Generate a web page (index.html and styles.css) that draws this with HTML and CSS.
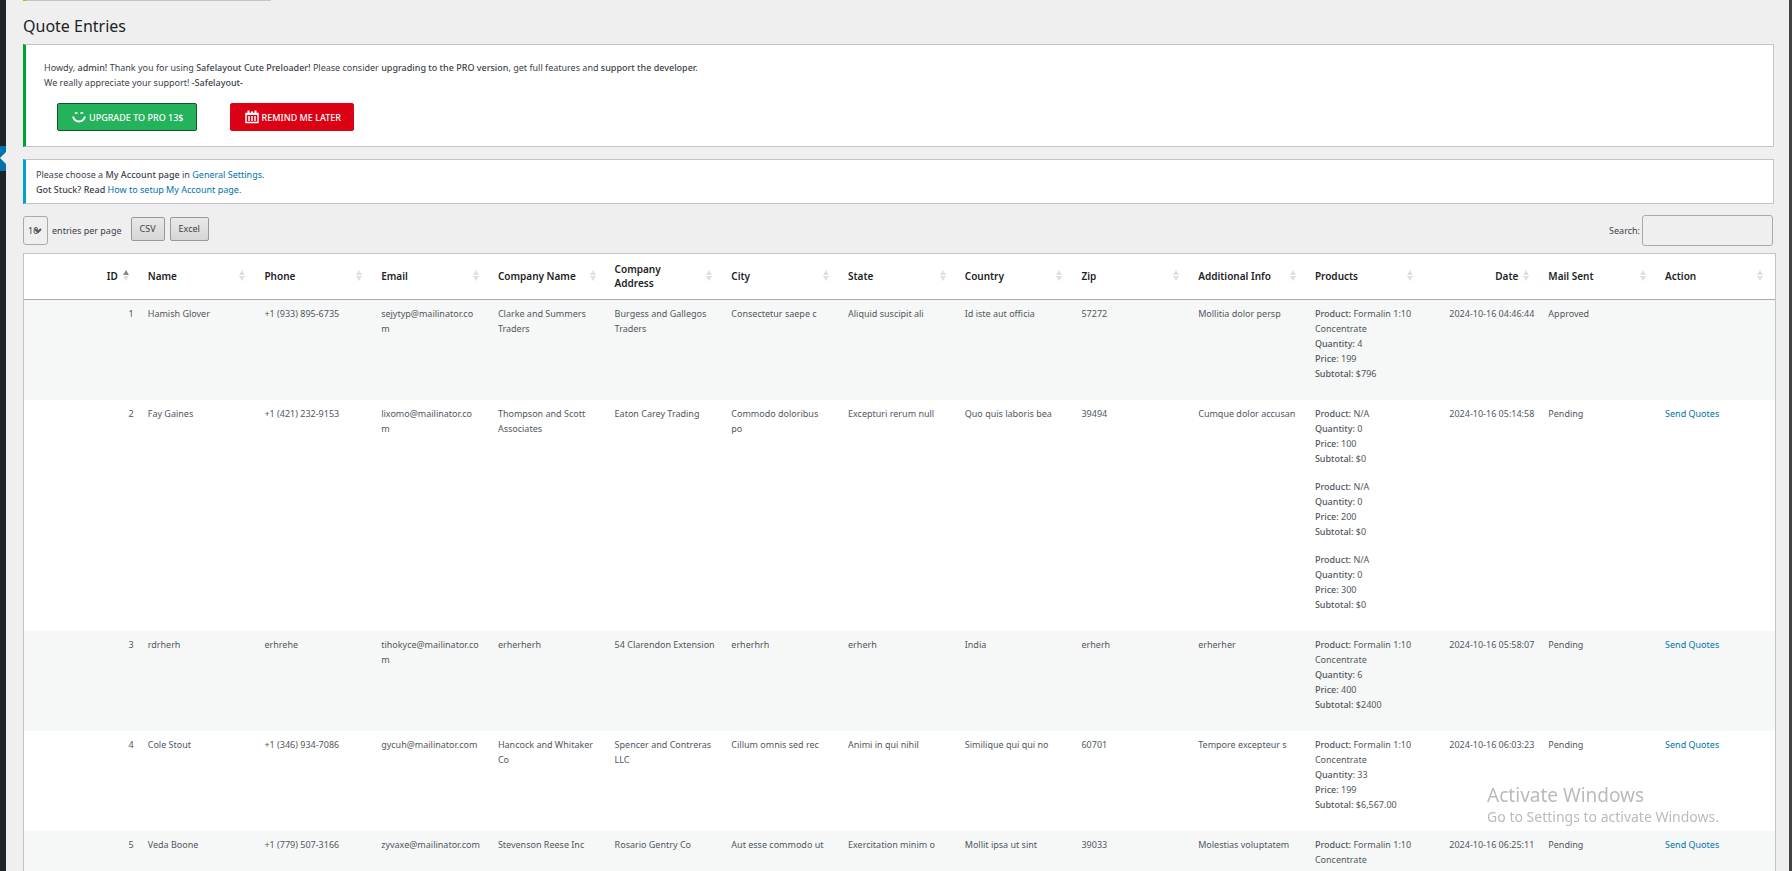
FILE: index.html
```html
<!DOCTYPE html>
<html lang="en">
<head>
    <meta charset="UTF-8">
    <meta name="viewport" content="width=device-width, initial-scale=1.0">
    <title>Quote Entries</title>
    <link rel="stylesheet" href="styles.css">
</head>
<body>
    <div class="admin-menu">
        <div class="menu-current"></div>
    </div>

    <div class="content">
        <div class="notice-edge"></div>
        <h1>Quote Entries</h1>

        <div class="notice notice-success">
            <p>Howdy, <strong>admin!</strong> Thank you for using <strong>Safelayout Cute Preloader!</strong> Please consider <strong>upgrading to the PRO version</strong>, get full features and <strong>support the developer.</strong><br>
            We really appreciate your support! <strong>-Safelayout-</strong></p>
            <div class="notice-actions">
                <button type="button" class="btn btn-upgrade">
                    <svg width="14" height="14" viewBox="0 0 14 14" fill="none" stroke="#fff">
                        <path d="M3 3.500Q4 2 5.500 3.500M8.500 3.500Q10 2 11 3.500" stroke-width="1.500"/>
                        <path d="M1 6.500Q2.500 11.500 7 11.500T13 6.500" stroke-width="2"/>
                    </svg>
                    <span>UPGRADE TO PRO <strong>13$</strong></span>
                </button>
                <button type="button" class="btn btn-remind">
                    <svg width="14" height="14" viewBox="0 0 14 14" fill="none" stroke="#fff">
                        <path d="M1 3.500H13V12.500H1Z" stroke-width="1.500"/>
                        <path d="M1 4H13M3.500 0.500V4M7 1.500V4M10.500 0.500V4" stroke-width="2"/>
                        <path d="M4 6V11M7 6V11M10 6V11" stroke-width="1.500"/>
                    </svg>
                    <span>REMIND ME LATER</span>
                </button>
            </div>
        </div>

        <div class="notice notice-info">
            <p>Please choose a <strong>My Account</strong> <strong>page</strong> in <a href="#">General Settings</a>.<br>
            <strong>Got Stuck? Read</strong> <a href="#">How to setup My Account page</a>.</p>
        </div>

        <div class="toolbar">
            <div class="page-length">
                <select id="page-length">
                    <option>10</option>
                    <option>25</option>
                    <option>50</option>
                </select>
                <svg width="8" height="6" viewBox="0 0 8 6" fill="none" stroke="#50575e" stroke-width="2">
                    <path d="M1 1L4 4L7 1"/>
                </svg>
            </div>
            <label for="page-length">entries per page</label>
            <div class="export">
                <button type="button" class="btn-export">CSV</button>
                <button type="button" class="btn-export">Excel</button>
            </div>
            <div class="search">
                <label for="search">Search:</label>
                <input type="search" id="search">
            </div>
        </div>

        <table class="entries">
            <thead>
                <tr>
                    <th class="num asc"><div><span>ID</span><i class="sort"></i></div></th>
                    <th><div><span>Name</span><i class="sort"></i></div></th>
                    <th><div><span>Phone</span><i class="sort"></i></div></th>
                    <th><div><span>Email</span><i class="sort"></i></div></th>
                    <th><div><span>Company Name</span><i class="sort"></i></div></th>
                    <th><div><span>Company<br>Address</span><i class="sort"></i></div></th>
                    <th><div><span>City</span><i class="sort"></i></div></th>
                    <th><div><span>State</span><i class="sort"></i></div></th>
                    <th><div><span>Country</span><i class="sort"></i></div></th>
                    <th><div><span>Zip</span><i class="sort"></i></div></th>
                    <th><div><span>Additional Info</span><i class="sort"></i></div></th>
                    <th><div><span>Products</span><i class="sort"></i></div></th>
                    <th class="num"><div><span>Date</span><i class="sort"></i></div></th>
                    <th><div><span>Mail Sent</span><i class="sort"></i></div></th>
                    <th><div><span>Action</span><i class="sort"></i></div></th>
                </tr>
            </thead>
            <tbody>
                <tr>
                    <td class="num">1</td>
                    <td>Hamish Glover</td>
                    <td>+1 (933) 895-6735</td>
                    <td>sejytyp@mailinator.co<br>m</td>
                    <td>Clarke and Summers Traders</td>
                    <td>Burgess and Gallegos Traders</td>
                    <td>Consectetur saepe c</td>
                    <td>Aliquid suscipit ali</td>
                    <td>Id iste aut officia</td>
                    <td>57272</td>
                    <td>Mollitia dolor persp</td>
                    <td>
                        <p><strong>Product:</strong> Formalin 1:10 Concentrate<br><strong>Quantity:</strong> 4<br><strong>Price:</strong> 199<br><strong>Subtotal:</strong> $796</p>
                    </td>
                    <td class="num">2024-10-16 04:46:44</td>
                    <td>Approved</td>
                    <td></td>
                </tr>
                <tr>
                    <td class="num">2</td>
                    <td>Fay Gaines</td>
                    <td>+1 (421) 232-9153</td>
                    <td>lixomo@mailinator.co<br>m</td>
                    <td>Thompson and Scott Associates</td>
                    <td>Eaton Carey Trading</td>
                    <td>Commodo doloribus<br>po</td>
                    <td>Excepturi rerum null</td>
                    <td>Quo quis laboris bea</td>
                    <td>39494</td>
                    <td>Cumque dolor accusan</td>
                    <td>
                        <p><strong>Product:</strong> N/A<br><strong>Quantity:</strong> 0<br><strong>Price:</strong> 100<br><strong>Subtotal:</strong> $0</p>
                        <p><strong>Product:</strong> N/A<br><strong>Quantity:</strong> 0<br><strong>Price:</strong> 200<br><strong>Subtotal:</strong> $0</p>
                        <p><strong>Product:</strong> N/A<br><strong>Quantity:</strong> 0<br><strong>Price:</strong> 300<br><strong>Subtotal:</strong> $0</p>
                    </td>
                    <td class="num">2024-10-16 05:14:58</td>
                    <td>Pending</td>
                    <td><a href="#">Send Quotes</a></td>
                </tr>
                <tr>
                    <td class="num">3</td>
                    <td>rdrherh</td>
                    <td>erhrehe</td>
                    <td>tihokyce@mailinator.co<br>m</td>
                    <td>erherherh</td>
                    <td>54 Clarendon Extension</td>
                    <td>erherhrh</td>
                    <td>erherh</td>
                    <td>India</td>
                    <td>erherh</td>
                    <td>erherher</td>
                    <td>
                        <p><strong>Product:</strong> Formalin 1:10 Concentrate<br><strong>Quantity:</strong> 6<br><strong>Price:</strong> 400<br><strong>Subtotal:</strong> $2400</p>
                    </td>
                    <td class="num">2024-10-16 05:58:07</td>
                    <td>Pending</td>
                    <td><a href="#">Send Quotes</a></td>
                </tr>
                <tr>
                    <td class="num">4</td>
                    <td>Cole Stout</td>
                    <td>+1 (346) 934-7086</td>
                    <td>gycuh@mailinator.com</td>
                    <td>Hancock and Whitaker Co</td>
                    <td>Spencer and Contreras LLC</td>
                    <td>Cillum omnis sed rec</td>
                    <td>Animi in qui nihil</td>
                    <td>Similique qui qui no</td>
                    <td>60701</td>
                    <td>Tempore excepteur s</td>
                    <td>
                        <p><strong>Product:</strong> Formalin 1:10 Concentrate<br><strong>Quantity:</strong> 33<br><strong>Price:</strong> 199<br><strong>Subtotal:</strong> $6,567.00</p>
                    </td>
                    <td class="num">2024-10-16 06:03:23</td>
                    <td>Pending</td>
                    <td><a href="#">Send Quotes</a></td>
                </tr>
                <tr>
                    <td class="num">5</td>
                    <td>Veda Boone</td>
                    <td>+1 (779) 507-3166</td>
                    <td>zyvaxe@mailinator.com</td>
                    <td>Stevenson Reese Inc</td>
                    <td>Rosario Gentry Co</td>
                    <td>Aut esse commodo ut</td>
                    <td>Exercitation minim o</td>
                    <td>Mollit ipsa ut sint</td>
                    <td>39033</td>
                    <td>Molestias voluptatem</td>
                    <td>
                        <p><strong>Product:</strong> Formalin 1:10 Concentrate<br><strong>Quantity:</strong> 68</p>
                    </td>
                    <td class="num">2024-10-16 06:25:11</td>
                    <td>Pending</td>
                    <td><a href="#">Send Quotes</a></td>
                </tr>
            </tbody>
        </table>
    </div>

    <div class="window-edge"></div>

    <div class="watermark">
        <div class="watermark-title">Activate Windows</div>
        <div>Go to Settings to activate Windows.</div>
    </div>
</body>
</html>
```
FILE: styles.css
```css
* {
    box-sizing: border-box;
}

body {
    display: flex;
    height: 100vh;
    margin: 0;
    overflow: hidden;
    background-color: #efefef;
    font-family: "Noto Sans", "Open Sans", sans-serif;
    font-size: 9px;
    line-height: 15px;
    color: #3c434a;
}

a {
    color: #0073aa;
    text-decoration: none;
}

strong {
    font-weight: 500;
}

p {
    margin: 0;
}

button, input, select {
    font-family: inherit;
    font-size: 9px;
    color: #3c434a;
}

.admin-menu {
    flex: 0 0 6px;
    padding-top: 146px;
    background-color: #1d2327;
}

.menu-current {
    position: relative;
    height: 25px;
    background-color: #0073aa;
}

.menu-current::after {
    content: "";
    position: absolute;
    top: 6px;
    right: 0;
    border: 6px solid transparent;
    border-left-width: 0;
    border-right-color: #efefef;
}

.content {
    flex: 1;
    min-width: 0;
    padding: 0 13px 0 17px;
}

.window-edge {
    flex: 0 0 3px;
    background-color: #424242;
}

.notice-edge {
    width: 248px;
    height: 1px;
    border-left: 3px solid #dba617;
    background-color: #c3c4c7;
}

h1 {
    margin: 13px 0 5px;
    font-size: 16px;
    font-weight: 400;
    line-height: 25px;
    color: #1d2327;
}

.notice {
    margin: 0 2px 12px 0;
    border: 1px solid #c3c4c7;
    border-left-width: 3px;
    background-color: #fff;
}

.notice-success {
    padding: 15px 17px 15px 18px;
    border-left-color: #00a32a;
}

.notice-info {
    margin-bottom: 11px;
    padding: 7px 10px 6px;
    border-left-color: #00a0d2;
}

.notice-actions {
    display: flex;
    gap: 33px;
    padding: 13px 13px 0;
}

.btn {
    display: flex;
    align-items: center;
    gap: 3px;
    height: 28px;
    padding: 0 12px 0 14px;
    border: 1px solid #24b35a;
    border-radius: 2px;
    background-color: #24b35a;
    font-weight: 500;
    color: #fff;
}

.btn-upgrade {
    border-color: #14532d;
}

.btn-remind {
    border-color: #dc0014;
    background-color: #dc0014;
}

.toolbar {
    display: flex;
    align-items: center;
    height: 31px;
    margin-bottom: 7px;
}

.page-length {
    position: relative;
    margin-right: 4px;
}

.page-length select {
    display: block;
    width: 25px;
    height: 29px;
    padding: 0 4px;
    border: 1px solid #aaa;
    border-radius: 3px;
    background-color: transparent;
    appearance: none;
}

.page-length svg {
    position: absolute;
    top: 12px;
    right: 6px;
    pointer-events: none;
}

.export {
    display: flex;
    gap: 5px;
    margin-left: 9px;
    padding-bottom: 4px;
}

.btn-export {
    height: 24px;
    padding: 0 8px;
    border: 1px solid #999;
    border-radius: 2px;
    background: linear-gradient(#e9e9e9, #d6d6d6);
}

.search {
    display: flex;
    align-items: center;
    gap: 2px;
    margin-left: auto;
    margin-right: 3px;
}

.search input {
    width: 131px;
    height: 31px;
    padding: 4px;
    border: 1px solid #aaa;
    border-radius: 3px;
    background-color: transparent;
}

.entries {
    width: 100%;
    table-layout: fixed;
    border: 1px solid #c3c4c7;
    border-spacing: 0;
    background-color: #fff;
    overflow-wrap: break-word;
}

.entries th {
    height: 46px;
    padding: 0 12px 2px 7px;
    border-bottom: 1px solid #aaa;
    font-size: 10px;
    font-weight: 600;
    line-height: 14px;
    text-align: left;
    color: #1d2327;
}

.entries th div {
    display: flex;
    align-items: center;
    justify-content: space-between;
}

.entries .num {
    text-align: right;
}

.entries th.num div {
    justify-content: flex-end;
    gap: 5px;
}

.sort {
    flex: none;
    width: 6px;
}

.sort::before, .sort::after {
    content: "";
    display: block;
    border: 3px solid transparent;
}

.sort::before {
    border-top-width: 0;
    border-bottom: 5px solid #e0e0e0;
    margin-bottom: 1px;
}

.sort::after {
    border-bottom-width: 0;
    border-top: 5px solid #e0e0e0;
}

.asc .sort::before {
    border-bottom-color: #82878c;
}

.entries td {
    padding: 6px 7px;
    vertical-align: top;
    color: #50575e;
}

.entries td p {
    margin-bottom: 13px;
}

.entries tbody tr:nth-child(odd) {
    background-color: #f6f7f7;
}

/* overlay in the bottom right corner */
.watermark {
    position: fixed;
    right: 73px;
    bottom: 43px;
    font-size: 14px;
    line-height: 22px;
    color: #bbb;
}

.watermark-title {
    font-size: 19px;
}
```
